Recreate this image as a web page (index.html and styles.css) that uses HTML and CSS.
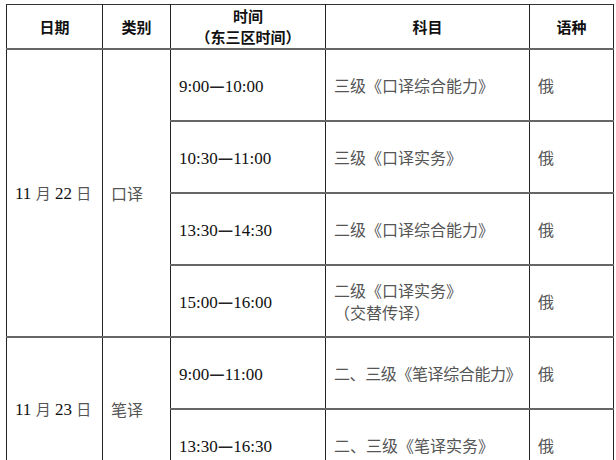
FILE: index.html
```html
<!DOCTYPE html>
<html lang="zh-CN">
<head>
<meta charset="utf-8">
<title>考试安排</title>
<link rel="stylesheet" href="styles.css">
</head>
<body>
<table class="schedule">
  <colgroup>
    <col class="c-date">
    <col class="c-type">
    <col class="c-time">
    <col class="c-subj">
    <col class="c-lang">
  </colgroup>
  <thead>
    <tr class="head">
      <th>日期</th>
      <th>类别</th>
      <th>时间<br>（东三区时间）</th>
      <th>科目</th>
      <th>语种</th>
    </tr>
  </thead>
  <tbody>
    <tr>
      <td rowspan="4" class="date">11 <span class="cn">月</span> 22 <span class="cn">日</span></td>
      <td rowspan="4" class="cn type">口译</td>
      <td class="time">9:00<span class="dash">—</span>10:00</td>
      <td class="cn subj">三级《口译综合能力》</td>
      <td class="cn lang">俄</td>
    </tr>
    <tr>
      <td class="time">10:30<span class="dash">—</span>11:00</td>
      <td class="cn subj">三级《口译实务》</td>
      <td class="cn lang">俄</td>
    </tr>
    <tr>
      <td class="time">13:30<span class="dash">—</span>14:30</td>
      <td class="cn subj">二级《口译综合能力》</td>
      <td class="cn lang">俄</td>
    </tr>
    <tr>
      <td class="time">15:00<span class="dash">—</span>16:00</td>
      <td class="cn subj">二级《口译实务》<br>（交替传译）</td>
      <td class="cn lang">俄</td>
    </tr>
    <tr>
      <td rowspan="2" class="date">11 <span class="cn">月</span> 23 <span class="cn">日</span></td>
      <td rowspan="2" class="cn type">笔译</td>
      <td class="time">9:00<span class="dash">—</span>11:00</td>
      <td class="cn subj subj-long">二、三级《笔译综合能力》</td>
      <td class="cn lang">俄</td>
    </tr>
    <tr>
      <td class="time">13:30<span class="dash">—</span>16:30</td>
      <td class="cn subj">二、三级《笔译实务》</td>
      <td class="cn lang">俄</td>
    </tr>
  </tbody>
</table>
</body>
</html>
```

FILE: styles.css
```css
html, body {
  margin: 0;
  background: #ffffff;
}

body {
  padding: 4px 0 0 6px;
  font-family: "Liberation Serif", "Noto Sans CJK SC", serif;
  color: #111111;
}

.schedule {
  border-collapse: collapse;
  table-layout: fixed;
  width: 607px;
}

.c-date { width: 96px; }
.c-type { width: 68px; }
.c-time { width: 155px; }
.c-subj { width: 204px; }
.c-lang { width: 84px; }

.schedule th,
.schedule td {
  border-left: 1px solid #222222;
  border-right: 1px solid #222222;
  border-top: 2px solid #666666;
  border-bottom: 2px solid #666666;
  padding: 0 0 0 8px;
  vertical-align: middle;
  text-align: left;
}

.schedule thead th {
  border-top: 1px solid #333333;
  border-bottom: 1px solid #333333;
}

.head {
  height: 44px;
}

.head th {
  font-family: "Noto Sans CJK SC", sans-serif;
  font-weight: 700;
  font-size: 15px;
  line-height: 21px;
  text-align: center;
  padding: 0;
  color: #111111;
}

tbody tr {
  height: 72px;
}

.date,
.time {
  font-size: 17px;
  color: #111111;
}

.cn {
  font-family: "Noto Sans CJK SC", sans-serif;
  font-weight: 400;
  font-size: 16px;
  color: #555555;
}

.date .cn {
  font-size: 15px;
}

.type {
  padding-left: 10px;
}

.subj {
  padding-left: 9px;
  line-height: 22px;
  white-space: nowrap;
}

.subj-long {
  letter-spacing: -0.4px;
}

.lang {
  padding-left: 9px;
}

.dash {
  font-family: "Noto Sans CJK SC", sans-serif;
  font-weight: 700;
  font-size: 17px;
  color: #222222;
}
```
